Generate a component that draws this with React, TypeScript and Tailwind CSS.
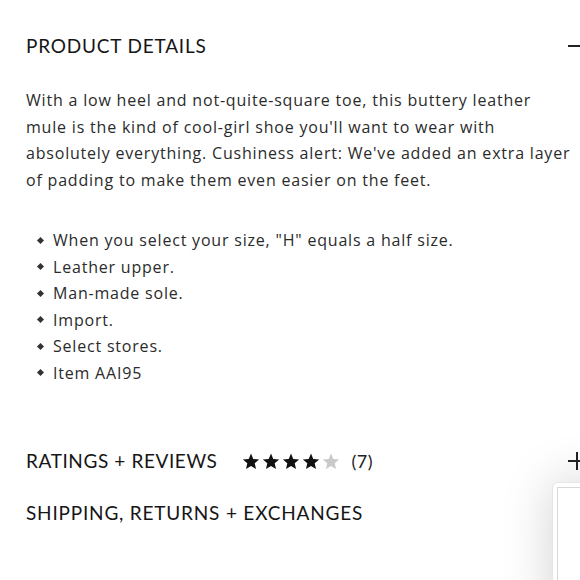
import React from "react";

const Star = ({ filled }: { filled: boolean }) => (
  <svg width="18" height="17" viewBox="0 0 24 23" className="shrink-0">
    <path
      d="M12 0.8l3.1 7.3 7.9 0.7-6 5.2 1.8 7.7L12 17.6l-6.8 4.1 1.8-7.7-6-5.2 7.9-0.7z"
      fill={filled ? "#111111" : "#c9c9c9"}
    />
  </svg>
);

export default function App() {
  const bullets = [
    'When you select your size, "H" equals a half size.',
    "Leather upper.",
    "Man-made sole.",
    "Import.",
    "Select stores.",
    "Item AAI95",
  ];
  return (
    <div className="relative w-[580px] h-[580px] overflow-hidden bg-white">
      <div className="pl-[26px] pt-[33px]">
        <div className="flex items-center justify-between h-[26px] font-['Lato',sans-serif] text-[19px] text-[#161616] tracking-[0.8px]">
          <span>PRODUCT DETAILS</span>
          <span className="block w-[18px] h-[2px] bg-[#222] mr-[-6px]" />
        </div>
        <div className="mt-[28px] font-['Open_Sans',sans-serif] text-[16px] leading-[26.5px] text-[#2b2b2b] tracking-[0.8px] whitespace-nowrap">
          <p>
            With a low heel and not-quite-square toe, this buttery leather
            <br />
            mule is the kind of cool-girl shoe you'll want to wear with
            <br />
            absolutely everything. Cushiness alert: We've added an extra layer
            <br />
            of padding to make them even easier on the feet.
          </p>
          <ul className="mt-[34px] pl-[12px]">
            {bullets.map((b) => (
              <li key={b} className="flex items-center">
                <span className="block w-[5px] h-[5px] bg-[#333] rotate-45 mr-[10px]" />
                <span>{b}</span>
              </li>
            ))}
          </ul>
        </div>
        <div className="mt-[62px] flex items-center h-[26px] font-['Lato',sans-serif] text-[19px] text-[#161616] tracking-[0.6px]">
          <span>RATINGS + REVIEWS</span>
          <span className="ml-[24px] flex items-center gap-[2px]">
            <Star filled />
            <Star filled />
            <Star filled />
            <Star filled />
            <Star filled={false} />
          </span>
          <span className="ml-[12px] text-[18px] text-[#222] tracking-[0.5px]">(7)</span>
          <span className="ml-auto relative w-[18px] h-[18px] mr-[-6px]">
            <span className="absolute left-0 right-0 top-[8px] h-[2px] bg-[#222]" />
            <span className="absolute top-0 bottom-0 left-[8px] w-[2px] bg-[#222]" />
          </span>
        </div>
        <div className="mt-[26px] flex items-center h-[26px] font-['Lato',sans-serif] text-[19px] text-[#161616] tracking-[0.8px]">
          <span>SHIPPING, RETURNS + EXCHANGES</span>
        </div>
      </div>
      <div className="absolute left-[552px] top-[482px] w-[60px] h-[140px] bg-white rounded-[6px] shadow-[0_0_50px_rgba(0,0,0,0.18)] border border-[#e6e6e6]">
        <div className="absolute left-[4px] top-[4px] right-0 bottom-0 border border-[#d8d8d8]" />
      </div>
    </div>
  );
}
